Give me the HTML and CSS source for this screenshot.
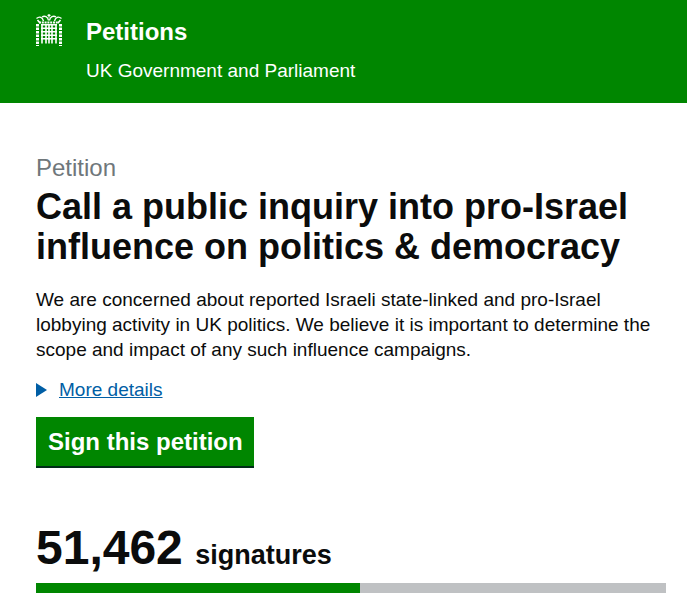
FILE: index.html
```html
<!DOCTYPE html>
<html lang="en">
<head>
<meta charset="utf-8">
<title>Petitions</title>
<link rel="stylesheet" href="styles.css">
</head>
<body>
<header class="site-header">
  <svg class="crest" viewBox="0 0 26 32" width="26" height="32" aria-hidden="true">
    <g fill="none" stroke="#fff">
      <path d="M13 0v3.500M11.500 1.300h3" stroke-width="1.200"/>
      <path d="M.5 4.500c3-2.500 6-1.500 7 2.500M25.500 4.500c-3-2.500-6-1.500-7 2.500M6 3c2.500-1.500 6-.5 6.500 3.500M20 3c-2.500-1.500-6-.5-6.500 3.500" stroke-width="1.400"/>
      <path d="M1.500 6l2.500 3M24.500 6l-2.500 3" stroke-width="1.600"/>
      <path d="M3 8.500h20" stroke-width="2.200" stroke-dasharray="2 .8"/>
      <path d="M5 10.800h16M5 14.300h16M5 17.800h16M5 21.300h16M5 24.800h16" stroke-width="1.400"/>
      <path d="M6 10v19.500M10 10v19.500M13 10v19.500M16 10v19.500M20 10v19.500" stroke-width="1.600"/>
      <path d="M1.500 10v22M24.500 10v22" stroke-width="3" stroke-dasharray="2.500 1"/>
    </g>
  </svg>
  <div class="header-text">
    <div class="site-title">Petitions</div>
    <div class="site-sub">UK Government and Parliament</div>
  </div>
</header>
<main class="content">
  <div class="caption">Petition</div>
  <h1 class="title">Call a public inquiry into pro-Israel influence on politics &amp; democracy</h1>
  <p class="summary">We are concerned about reported Israeli state-linked and pro-Israel lobbying activity in UK politics. We believe it is important to determine the scope and impact of any such influence campaigns.</p>
  <div class="details"><span class="arrow"></span><a class="details-link" href="#">More details</a></div>
  <a class="button" href="#">Sign this petition</a>
  <div class="count"><span class="count-num">51,462</span> <span class="count-label">signatures</span></div>
  <div class="bar"><div class="bar-fill" style="width:51.43%"></div></div>
</main>
</body>
</html>
```
FILE: styles.css
```css
html, body { margin: 0; padding: 0; background: #fff; }
body { font-family: "Liberation Sans", Arial, sans-serif; color: #0b0c0c; }
.site-header { background: #008600; height: 103px; box-sizing: border-box; padding: 14px 0 0 36px; display: flex; gap: 24px; color: #fff; }
.crest { flex: none; }
.header-text { display: flex; flex-direction: column; }
.site-title { font-size: 24px; font-weight: 700; line-height: 30px; margin-top: 3px; }
.site-sub { font-size: 19px; line-height: 25px; margin-top: 11px; }
.content { padding: 52px 21px 0 36px; }
.caption { font-size: 24px; line-height: 26px; color: #6f777b; }
.title { margin: 6px 0 0; font-size: 36px; line-height: 40px; font-weight: 700; }
.summary { margin: 20px 0 0; font-size: 19px; line-height: 25px; }
.details { margin-top: 15px; font-size: 19px; line-height: 25px; display: flex; align-items: center; gap: 12px; }
.arrow { width: 0; height: 0; border-left: 11px solid #005ea5; border-top: 7px solid transparent; border-bottom: 7px solid transparent; }
.details-link { color: #005ea5; text-decoration: underline; }
.button { display: inline-block; box-sizing: border-box; width: 218px; margin-top: 15px; padding: 0 12px; height: 49px; line-height: 50px; background: #008600; color: #fff; font-size: 24px; font-weight: 700; text-decoration: none; white-space: nowrap; box-shadow: 0 2px 0 #002d18; }
.count { margin-top: 58px; line-height: 48px; white-space: nowrap; }
.count-num { font-size: 48px; font-weight: 700; }
.count-label { font-size: 27px; font-weight: 700; margin-left: 8px; }
.bar { height: 10px; background: #bfc1c3; }
.bar-fill { height: 100%; background: #008600; }
```
